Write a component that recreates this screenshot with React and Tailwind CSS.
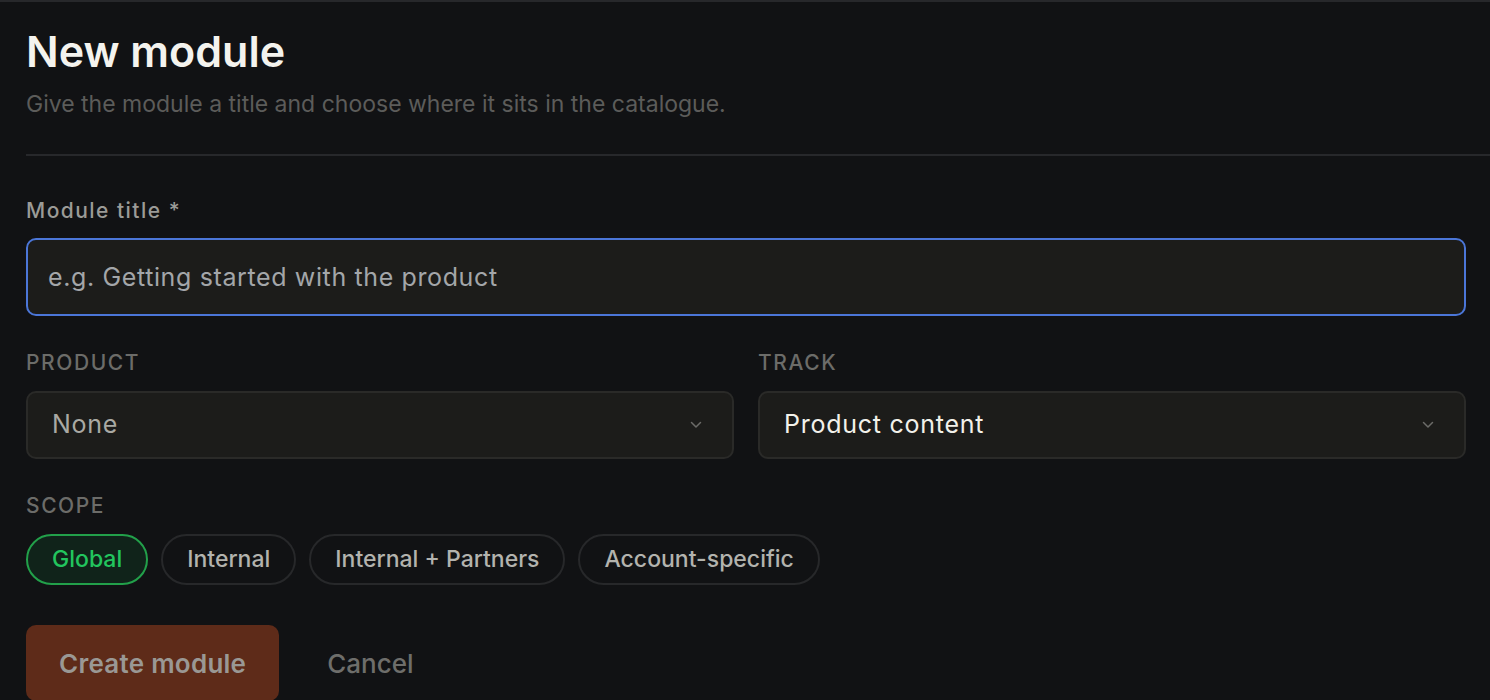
import React, { useState } from "react";

const scopes = ["Global", "Internal", "Internal + Partners", "Account-specific"];

const Chevron = () => (
  <svg width="12" height="8" viewBox="0 0 12 8" fill="none" className="shrink-0">
    <path d="M1.5 1.5L6 6L10.5 1.5" stroke="#6b6b68" strokeWidth="1.5" strokeLinecap="round" strokeLinejoin="round" />
  </svg>
);

const Select = ({ label, value, muted }) => (
  <div className="flex flex-col">
    <label className="text-[21px] leading-[28px] font-medium uppercase tracking-[0.075em] text-[#6c6c69]">
      {label}
    </label>
    <button className="mt-[14px] h-[68px] w-full flex items-center justify-between rounded-[10px] border-2 border-[#2a2a28] bg-[#1c1c1a] pl-[24px] pr-[30px] text-left">
      <span className={`text-[25px] tracking-[0.03em] ${muted ? "text-[#a9a9a3]" : "text-[#f2f1ea]"}`}>
        {value}
      </span>
      <Chevron />
    </button>
  </div>
);

export default function App() {
  const [scope, setScope] = useState("Global");
  const [title, setTitle] = useState("");

  return (
    <div
      className="min-h-screen bg-[#111214] border-t-2 border-[#27282b] overflow-hidden"
      style={{ fontFamily: "Inter, 'Noto Sans', sans-serif" }}
    >
      <div className="pl-[26px] pt-[24px]">
        {/* Header */}
        <h1 className="text-[43px] leading-[50px] font-semibold text-[#f4f3ee]">
          New module
        </h1>
        <p className="mt-[13px] text-[23px] leading-[30px] text-[#5c5c5a]">
          Give the module a title and choose where it sits in the catalogue.
        </p>
        <hr className="mt-[35px] border-0 border-t-2 border-[#27282b]" />
      </div>

      <div className="pl-[26px] pr-[24px]">
        {/* Title field */}
        <label className="mt-[41px] block text-[21px] leading-[28px] font-medium tracking-[0.07em] text-[#9b9b97]">
          Module title *
        </label>
        <input
          type="text"
          value={title}
          onChange={(e) => setTitle(e.target.value)}
          placeholder="e.g. Getting started with the product"
          className="mt-[13px] h-[78px] w-full rounded-[10px] border-2 border-[#4b76d8] bg-[#1c1c1a] px-[20px] text-[25px] tracking-[0.025em] text-[#f2f1ea] placeholder:text-[#a3a6a9] outline-none"
        />

        {/* Product / Track */}
        <div className="mt-[33px] grid grid-cols-2 gap-[24px]">
          <Select label="Product" value="None" muted />
          <Select label="Track" value="Product content" />
        </div>

        {/* Scope */}
        <div className="mt-[33px] text-[21px] leading-[28px] font-medium uppercase tracking-[0.075em] text-[#6c6c69]">
          Scope
        </div>
        <div className="mt-[14px] flex gap-[13px]">
          {scopes.map((s) => (
            <button
              key={s}
              onClick={() => setScope(s)}
              className={
                s === scope
                  ? "h-[51px] rounded-full border-2 border-[#22a04a] bg-[#10231a] px-[24px] text-[23px] font-medium text-[#22c55e]"
                  : "h-[51px] rounded-full border-2 border-[#27282a] bg-transparent px-[24px] text-[23px] font-medium text-[#b3b3ae]"
              }
            >
              {s}
            </button>
          ))}
        </div>

        {/* Actions */}
        <div className="mt-[40px] flex items-center gap-[48px]">
          <button className="h-[76px] rounded-[10px] bg-[#5e2b19] px-[33px] text-[26px] font-semibold tracking-[0.01em] text-[#9a9894]">
            Create module
          </button>
          <button className="text-[26px] font-medium text-[#6e6e6b]">Cancel</button>
        </div>
      </div>
    </div>
  );
}
